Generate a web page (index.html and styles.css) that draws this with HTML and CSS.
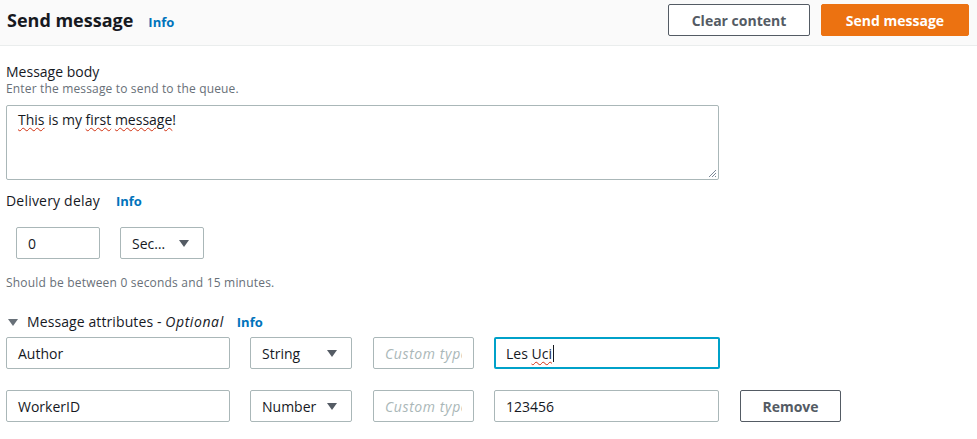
FILE: index.html
```html
<!DOCTYPE html>
<html lang="en">
<head>
<meta charset="utf-8">
<title>Send message</title>
<link rel="stylesheet" href="styles.css">
</head>
<body>
<header class="page-header">
  <div class="title-group">
    <h1 class="title">Send message</h1>
    <a class="info">Info</a>
  </div>
  <div class="actions">
    <button class="btn btn-normal">Clear content</button>
    <button class="btn btn-primary">Send message</button>
  </div>
</header>

<main class="content">
  <section class="field">
    <div class="label">Message body</div>
    <div class="description">Enter the message to send to the queue.</div>
    <div class="textarea"><span class="spell">This</span> is my <span class="spell">first</span> <span class="spell">message</span>!<svg class="grip" width="9" height="9" viewBox="0 0 9 9"><path d="M8 1 L1 8 M8 4 L4 8 M8 7 L7 8" stroke="#7d8998" stroke-width="1"/></svg></div>
  </section>

  <section class="field delay">
    <div class="label-row"><span class="label">Delivery delay</span><a class="info">Info</a></div>
    <div class="delay-row">
      <div class="input w-small"><span>0</span></div>
      <div class="select w-small"><span>Sec…</span><span class="caret"></span></div>
    </div>
    <div class="hint">Should be between 0 seconds and 15 minutes.</div>
  </section>

  <section class="attributes">
    <div class="label-row attr-head">
      <span class="expander"></span>
      <span class="label">Message attributes - <em>Optional</em></span>
      <a class="info">Info</a>
    </div>
    <div class="attr-row first">
      <div class="input w-name"><span>Author</span></div>
      <div class="select w-type"><span>String</span><span class="caret"></span></div>
      <div class="input w-custom placeholder"><span class="clip">Custom type</span></div>
      <div class="input w-value focused"><span>Les <span class="spell">Uci</span><span class="cursor"></span></span></div>
    </div>
    <div class="attr-row">
      <div class="input w-name"><span>WorkerID</span></div>
      <div class="select w-type"><span>Number</span><span class="caret"></span></div>
      <div class="input w-custom placeholder"><span class="clip">Custom type</span></div>
      <div class="input w-value"><span>123456</span></div>
      <button class="btn btn-normal btn-remove">Remove</button>
    </div>
  </section>
</main>
</body>
</html>
```

FILE: styles.css
```css
* { box-sizing: border-box; }

body {
  margin: 0;
  background: #ffffff;
  font-family: "Open Sans", "Noto Sans", sans-serif;
  color: #16191f;
  font-size: 14px;
}

.page-header {
  height: 46px;
  background: #fafafa;
  border-bottom: 1px solid #eaeded;
  display: flex;
  justify-content: space-between;
  align-items: flex-start;
  padding: 0 8px 0 7px;
}

.title-group {
  display: flex;
  align-items: baseline;
  gap: 15px;
  padding-top: 6px;
}

.title {
  margin: 0;
  font-size: 18px;
  font-weight: 700;
  line-height: 28px;
  color: #16191f;
}

.info {
  color: #0073bb;
  font-weight: 700;
  font-size: 13px;
  cursor: pointer;
}

.actions {
  display: flex;
  gap: 11px;
  padding-top: 4px;
}

.btn {
  font-family: inherit;
  font-weight: 700;
  font-size: 14px;
  height: 32px;
  border-radius: 2px;
  padding: 0;
  cursor: pointer;
}

.btn-normal {
  background: #ffffff;
  border: 1px solid #545b64;
  color: #545b64;
  width: 142px;
}

.btn-primary {
  background: #ec7211;
  border: 1px solid #ec7211;
  color: #ffffff;
  width: 148px;
}

.content {
  padding: 17px 0 0 6px;
}

.label {
  font-size: 14px;
  line-height: 18px;
  color: #16191f;
}

.label em {
  letter-spacing: 0.6px;
}

.description {
  font-size: 12px;
  line-height: 16px;
  letter-spacing: 0.16px;
  color: #687078;
}

.textarea {
  position: relative;
  margin-top: 8px;
  width: 713px;
  height: 75px;
  border: 1px solid #aab7b8;
  border-radius: 2px;
  padding: 4px 11px;
  line-height: 20px;
  font-size: 14px;
}

.grip {
  position: absolute;
  right: 1px;
  bottom: 1px;
}

.spell {
  text-decoration: underline wavy #d13212;
  text-decoration-thickness: 1px;
  text-underline-offset: 2px;
}

.delay { margin-top: 11px; }

.label-row {
  display: flex;
  align-items: baseline;
  gap: 16px;
  line-height: 20px;
}

.label-row .label { line-height: 20px; }

.delay .label { letter-spacing: 0.2px; }

.delay-row {
  display: flex;
  gap: 20px;
  margin-top: 16px;
  padding-left: 10px;
}

.input, .select {
  height: 32px;
  border: 1px solid #aab7b8;
  border-radius: 2px;
  padding: 0 11px;
  display: flex;
  align-items: center;
  font-size: 14px;
  color: #16191f;
  white-space: nowrap;
  background: #ffffff;
}

.select {
  justify-content: space-between;
  padding-right: 14px;
}

.caret {
  width: 0;
  height: 0;
  border-left: 5px solid transparent;
  border-right: 5px solid transparent;
  border-top: 7px solid #545b64;
}

.w-small { width: 84px; }

.hint {
  margin-top: 16px;
  font-size: 12px;
  line-height: 16px;
  letter-spacing: 0.2px;
  color: #687078;
}

.attributes { margin-top: 21px; }

.attr-head {
  gap: 0;
  padding-left: 2px;
  align-items: center;
}

.expander {
  width: 0;
  height: 0;
  border-left: 5px solid transparent;
  border-right: 5px solid transparent;
  border-top: 7px solid #687078;
  margin-right: 9px;
}

.attr-head .label { letter-spacing: 0.1px; }

.attr-head .info { margin-left: 13px; }

.attr-row {
  display: flex;
  gap: 20px;
  margin-top: 21px;
}

.attr-row.first { margin-top: 5px; }

.w-name { width: 224px; }
.w-type { width: 102px; }
.w-custom { width: 101px; margin-left: 1px; }
.w-value { width: 225px; }

.placeholder {
  color: #aab7b8;
  font-style: italic;
  letter-spacing: 0.6px;
}

.clip {
  display: block;
  width: 77px;
  overflow: hidden;
}

.focused {
  border: 2px solid #00a1c9;
  padding-left: 10px;
  width: 226px;
  margin-right: -1px;
}

.cursor {
  display: inline-block;
  width: 1px;
  height: 17px;
  background: #16191f;
  margin-left: 1px;
  vertical-align: -3px;
}

.btn-remove {
  width: 101px;
  height: 32px;
  margin-left: 1px;
}
```
